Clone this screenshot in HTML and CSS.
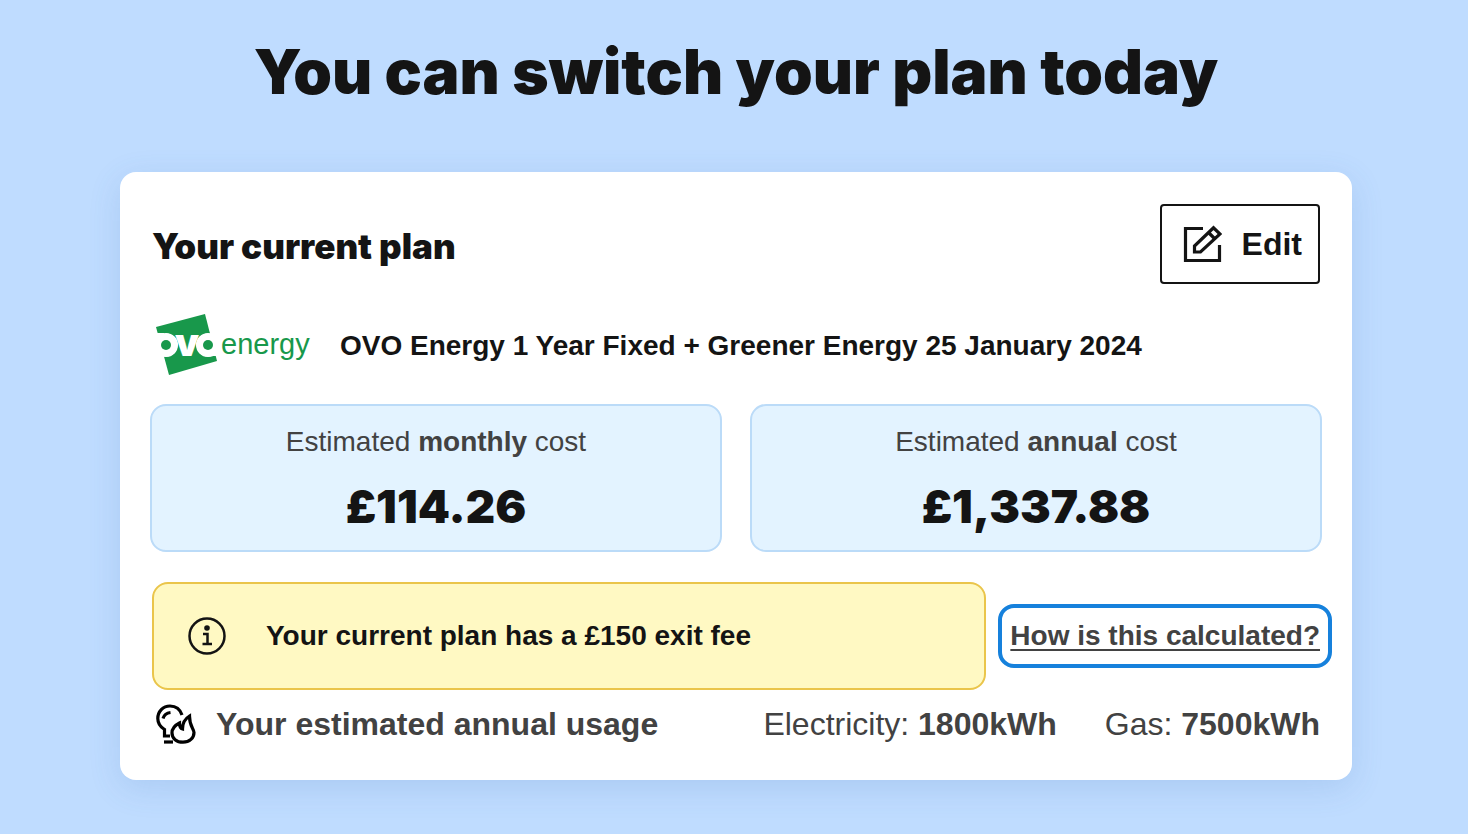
FILE: index.html
```html
<!DOCTYPE html>
<html lang="en">
  <head>
    <meta charset="UTF-8" />
    <meta name="viewport" content="width=device-width, initial-scale=1.0" />
    <title>You can switch your plan today</title>
    <link rel="stylesheet" href="styles.css">
  </head>
  <body>
    <main class="page">
      <h1 class="page-title">You can switch your plan today</h1>

      <section class="card">
        <div class="card-header">
          <h2 class="card-title">Your current plan</h2>
          <button class="edit-button" type="button">
            <svg class="edit-icon" viewBox="0 0 40 40" fill="none" stroke="currentColor" stroke-width="3.2">
              <path d="M21 4.5H3.5V36.500H37.500V21" />
              <path d="M12.500 28V22L31.500 3.800L38 10L18.500 28Z" />
              <path d="M26.500 8.500L33 15" />
            </svg>
            Edit
          </button>
        </div>

        <div class="plan">
          <svg class="plan-logo" viewBox="0 0 156 64">
            <path class="logo-shape" d="M4 13L53 0L65 47L17 61Z" />
            <path class="logo-gap" d="M0 19H12V42H0ZM58 19H70V42H58Z" />
            <circle class="logo-gap" cx="14" cy="31" r="12" />
            <circle class="logo-gap" cx="56" cy="31" r="12" />
            <text class="logo-name" x="35" y="42" text-anchor="middle">ovo</text>
            <circle class="logo-ring" cx="14" cy="31" r="8" />
            <circle class="logo-ring" cx="56" cy="31" r="8" />
            <circle class="logo-shape" cx="14" cy="31" r="5" />
            <circle class="logo-shape" cx="56" cy="31" r="5" />
            <text class="logo-word" x="69" y="40">energy</text>
          </svg>
          <p class="plan-name">OVO Energy 1 Year Fixed + Greener Energy 25 January 2024</p>
        </div>

        <div class="costs">
          <div class="cost">
            <p class="cost-label">Estimated <b>monthly</b> cost</p>
            <p class="cost-value">£114.26</p>
          </div>
          <div class="cost">
            <p class="cost-label">Estimated <b>annual</b> cost</p>
            <p class="cost-value">£1,337.88</p>
          </div>
        </div>

        <div class="notice-row">
          <div class="notice">
            <svg class="notice-icon" viewBox="0 0 38 38" fill="none" stroke="currentColor" stroke-width="2.5">
              <circle cx="19" cy="19" r="17.5" />
              <circle cx="19" cy="11" r="2.8" fill="currentColor" stroke="none" />
              <path d="M15 17H19.500V26.500M14.500 27H24" />
            </svg>
            <p>Your current plan has a £150 exit fee</p>
          </div>
          <a class="calc-link" href="#">How is this calculated?</a>
        </div>

        <div class="usage">
          <svg class="usage-icon" viewBox="0 0 40 40" fill="none" stroke="currentColor" stroke-width="3.2">
            <path d="M26 11C24 5 19.500 2 14 2C7 2 1.800 7.500 1.800 14.500C1.800 19.500 4.500 23 8.500 25.500V32H14" />
            <path d="M7 14.500C8 11 10.500 9 14.500 8.500" />
            <path d="M8 38H17" />
            <path d="M33.500 12C28.500 15 26.500 19 26.500 25C24.500 24.500 23.500 22.500 23.500 19C18.500 21.500 16 25 16 29C16 34.500 20.500 38.200 27 38.200C33.500 38.200 38 34 38 28.500C38 24.500 33.500 23 33.500 12Z" />
          </svg>
          <h3 class="usage-title">Your estimated annual usage</h3>
          <p class="usage-value">Electricity: <b>1800kWh</b></p>
          <p class="usage-value">Gas: <b>7500kWh</b></p>
        </div>
      </section>
    </main>
  </body>
</html>
```

FILE: styles.css
```css
* {
  box-sizing: border-box;
}
body {
  margin: 0;
  background: #bfdcff;
  color: #141414;
  font-family: "Liberation Sans", Arial, sans-serif;
}
h1,
h2,
h3,
p {
  margin: 0;
}
.page {
  padding: 32px 116px 48px 120px;
}
.page-title {
  margin-bottom: 60px;
  font-family: Inter, sans-serif;
  font-size: 62px;
  font-weight: 900;
  line-height: 80px;
  text-align: center;
}
.card {
  padding: 32px 32px 36px;
  background: #fff;
  border-radius: 16px;
  box-shadow: 0 8px 32px rgba(60, 110, 180, 0.16);
}
.card-header {
  display: flex;
  justify-content: space-between;
  align-items: center;
}
.card-title {
  padding-top: 4px;
  font-family: Inter, sans-serif;
  font-size: 35px;
  font-weight: 900;
  line-height: 40px;
}
.edit-button {
  display: flex;
  align-items: center;
  gap: 20px;
  height: 80px;
  padding: 0 16px 0 20px;
  background: #fff;
  color: #141414;
  border: 2px solid #141414;
  border-radius: 4px;
  font-family: inherit;
  font-size: 32px;
  font-weight: bold;
  cursor: pointer;
}
.edit-icon {
  width: 40px;
  height: 40px;
}
.plan {
  display: flex;
  align-items: center;
  gap: 32px;
  margin: 30px 0 26px;
}
.plan-logo {
  width: 156px;
  height: 64px;
  overflow: visible;
}
.logo-shape {
  fill: #18984b;
}
.logo-gap {
  fill: #fff;
}
.logo-ring {
  fill: none;
  stroke: #fff;
  stroke-width: 7px;
}
.logo-name {
  fill: #fff;
  font-family: Inter, sans-serif;
  font-size: 38px;
  font-weight: 900;
}
.logo-word {
  fill: #18984b;
  font-size: 29px;
}
.plan-name {
  font-size: 28px;
  font-weight: bold;
  line-height: 40px;
}
.costs {
  display: grid;
  grid-template-columns: 1fr 1fr;
  gap: 28px;
  margin: 0 -2px 30px;
}
.cost {
  padding: 16px 16px 12px;
  background: #e3f3ff;
  border: 2px solid #bbdbf8;
  border-radius: 16px;
  text-align: center;
}
.cost-label {
  color: #424242;
  font-size: 28px;
  line-height: 40px;
}
.cost-value {
  margin-top: 12px;
  font-family: Inter, sans-serif;
  font-size: 46px;
  font-weight: 900;
  line-height: 64px;
}
.notice-row {
  display: flex;
  align-items: center;
  gap: 24px;
}
.notice {
  flex: 1;
  display: flex;
  align-items: center;
  gap: 40px;
  padding: 32px 34px;
  background: #fff9c3;
  border: 2px solid #eac54b;
  border-radius: 16px;
  font-size: 28px;
  font-weight: bold;
  line-height: 40px;
}
.notice-icon {
  width: 38px;
  height: 38px;
}
.calc-link {
  color: #424242;
  font-size: 28px;
  font-weight: bold;
  line-height: 40px;
  text-underline-offset: 4px;
  border-radius: 4px;
  outline: 4px solid #1681dc;
  outline-offset: 8px;
}
.usage {
  display: flex;
  align-items: center;
  margin-top: 14px;
  color: #424242;
  font-size: 32px;
  line-height: 40px;
}
.usage-icon {
  width: 40px;
  height: 40px;
  margin: 0 20px 0 4px;
  color: #000;
}
.usage-title {
  flex: 1;
  font-size: 32px;
}
.usage-value + .usage-value {
  margin-left: 48px;
}
```
